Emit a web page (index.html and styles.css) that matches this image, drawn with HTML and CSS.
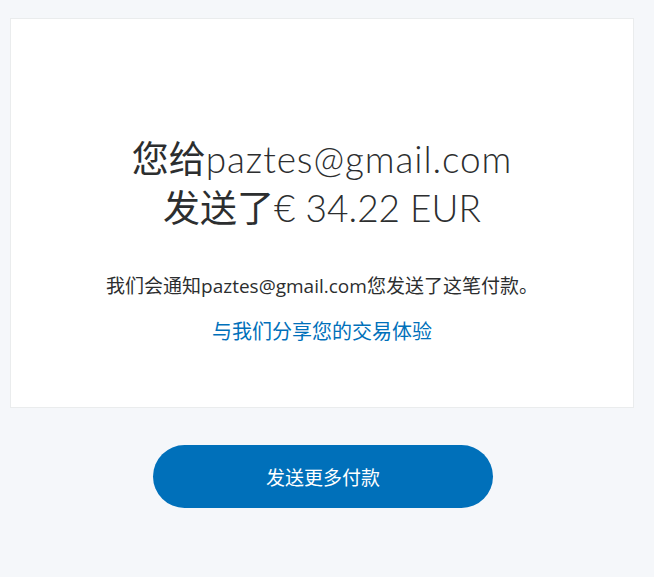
FILE: index.html
```html
<!DOCTYPE html>
<html>
<head>
    <title>付款已发送</title>
    <link rel="stylesheet" href="styles.css">
</head>
<body>
    <div class="page">
        <div class="card">
            <h1 class="title">
                <span class="cn">您给</span><span class="email">paztes@gmail.com</span><br>
                <span class="cn">发送了</span>€ 34.22 EUR
            </h1>
            <p class="notice">我们会通知paztes@gmail.com您发送了这笔付款。</p>
            <a class="feedback" href="#">与我们分享您的交易体验</a>
        </div>
        <a class="send-more" href="#">发送更多付款</a>
    </div>
</body>
</html>
```

FILE: styles.css
```css
body {
    margin: 0;
    background: #f5f7fa;
    font-family: Lato, "Noto Sans CJK SC", sans-serif;
    color: #2c2e2f;
}
.page {
    padding: 18px 20px 0 10px;
    display: flex;
    flex-direction: column;
    align-items: center;
}
.card {
    box-sizing: border-box;
    width: 100%;
    height: 390px;
    background: #fff;
    border: 1px solid #eaeced;
    padding-top: 115px;
    display: flex;
    flex-direction: column;
    align-items: center;
    text-align: center;
}
.title {
    margin: 0;
    font-size: 37px;
    line-height: 49px;
    font-weight: 300;
    color: #2c2e2f;
}
.title .cn { font-weight: 400; }
.title .email { letter-spacing: 0.9px; }
.notice {
    margin: 41px 0 0;
    font-family: "Open Sans", "Noto Sans CJK SC", sans-serif;
    font-size: 19px;
    line-height: 27px;
}
.feedback {
    margin-top: 18px;
    font-size: 20px;
    line-height: 27px;
    color: #0070ba;
    text-decoration: none;
}
.send-more {
    margin: 37px 0 0 2px;
    width: 340px;
    height: 63px;
    border-radius: 32px;
    background: #0070ba;
    color: #fff;
    font-size: 19px;
    text-decoration: none;
    display: flex;
    align-items: center;
    justify-content: center;
}
```
